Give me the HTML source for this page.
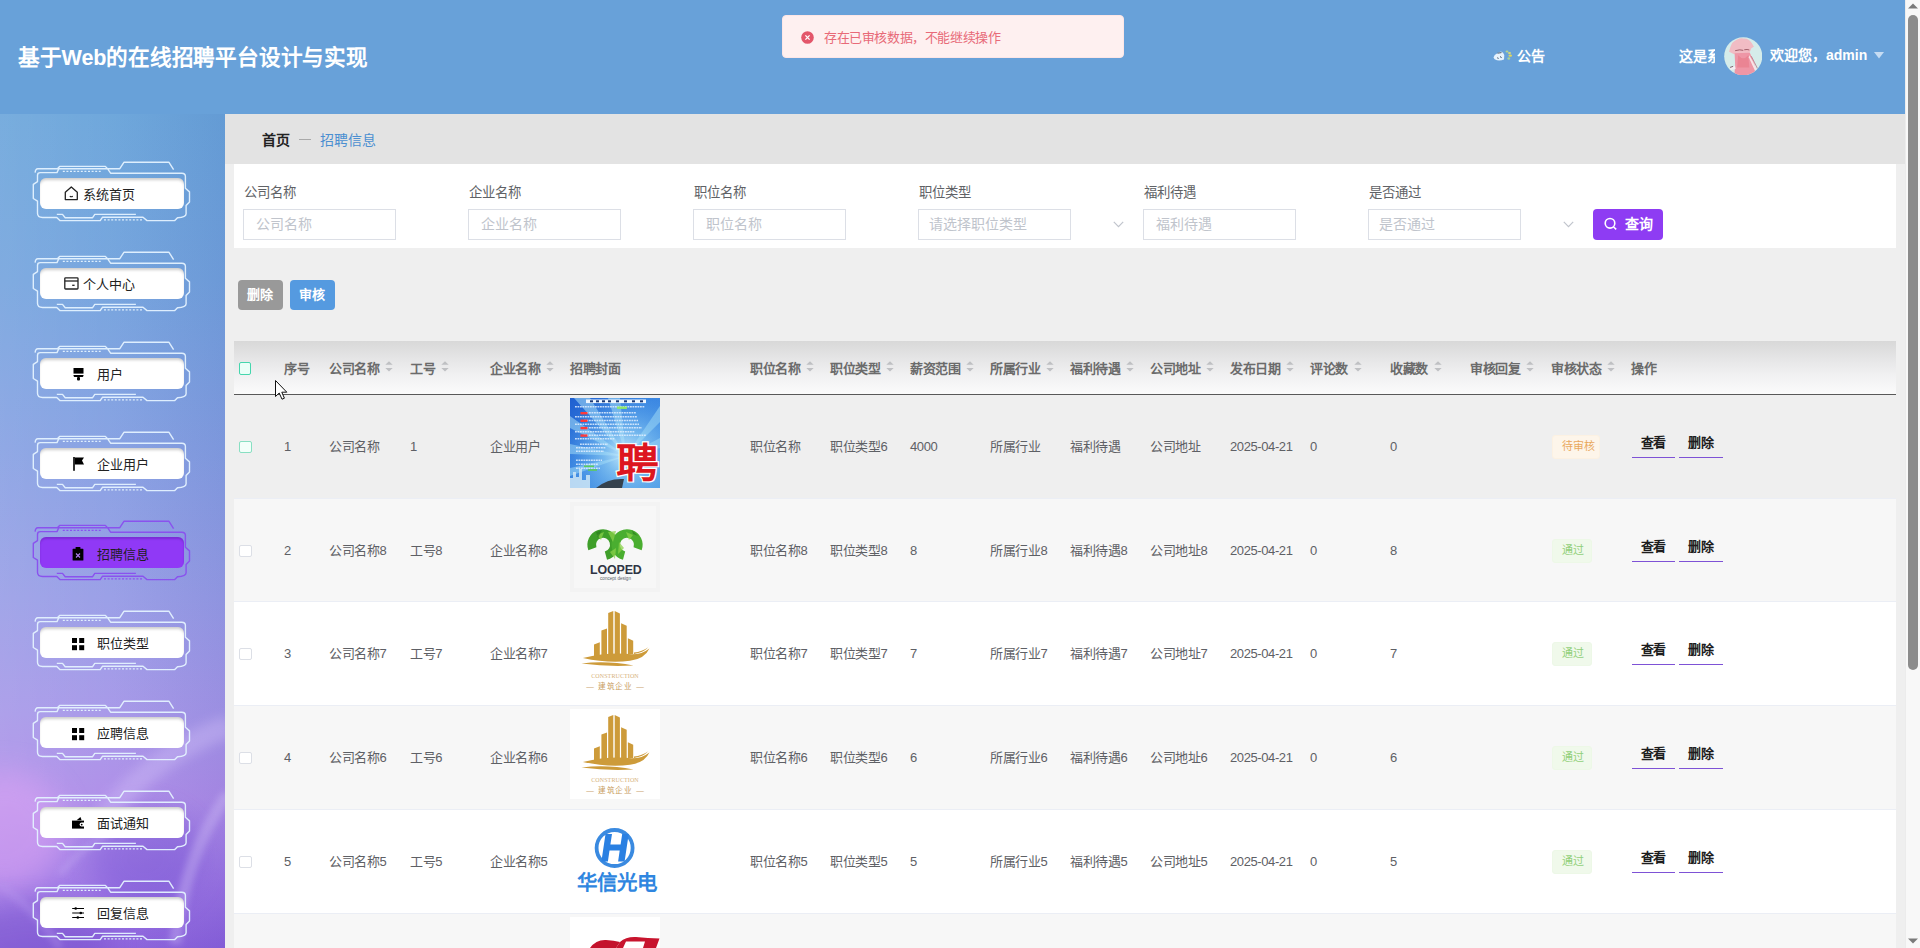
<!DOCTYPE html><html lang="zh-CN"><head><meta charset="utf-8"><title>招聘信息</title><style>
*{margin:0;padding:0;box-sizing:border-box}
html,body{width:1920px;height:948px;overflow:hidden}
body{position:relative;background:#efefef;font-family:"Liberation Sans",sans-serif;color:#606266}
.a{position:absolute}
.t{position:absolute;white-space:nowrap;line-height:1}
</style></head><body>
<div class="a" style="left:0;top:0;width:1905px;height:114px;background:#68a1d9"></div>
<div class="t" style="left:18px;top:47.12px;font-size:21.6px;color:#fff;font-weight:bold;letter-spacing:-0.2px;">基于Web的在线招聘平台设计与实现</div>
<div class="a" style="left:782px;top:15px;width:342px;height:43px;background:#fef0f0;border:1px solid #fde6e6;border-radius:4px"></div>
<svg class="a" style="left:801px;top:30.5px" width="13" height="13" viewBox="0 0 13 13"><circle cx="6.5" cy="6.5" r="6.3" fill="#e3566a"/><path d="M4.4 4.4L8.6 8.6M8.6 4.4L4.4 8.6" stroke="#fff" stroke-width="1.3"/></svg>
<div class="t" style="left:824px;top:30.65px;font-size:13px;color:#e86a78;font-weight:normal;letter-spacing:-0.4px;">存在已审核数据，不能继续操作</div>
<svg class="a" style="left:1492px;top:48px" width="24" height="16" viewBox="0 0 24 16"><path d="M1.5 9.5 Q3 6 6.5 4.5 L9 3.4 Q11.5 4 12.3 7 L12 11.5 Q9 12.8 5 12.3 Q2 11.8 1.5 9.5Z" fill="#e6f2fd"/><path d="M5.5 5.2 L9.5 4.6" stroke="#3b4b5e" stroke-width="0.9"/><path d="M5.2 9.8 l1.4 0.6 M8 8.6 l1.6 1" stroke="#3b4b5e" stroke-width="1"/><ellipse cx="15" cy="3.6" rx="1.4" ry="1" fill="#b8d68a"/><ellipse cx="17.5" cy="5" rx="1.6" ry="1" fill="#d8d878"/><ellipse cx="18.3" cy="7.7" rx="1.8" ry="1.1" fill="#e2d65a"/><ellipse cx="16.8" cy="10.5" rx="1.4" ry="1.3" fill="#a8d09a"/></svg>
<div class="t" style="left:1517px;top:49.30px;font-size:14px;color:#fff;font-weight:600;">公告</div>
<div class="a" style="left:1679px;top:46px;width:36px;height:22px;overflow:hidden"><div class="t" style="left:0px;top:3.30px;font-size:14px;color:#fff;font-weight:bold;">这是系统</div></div>
<svg class="a" style="left:1723.5px;top:36.5px" width="38.5" height="38.5" viewBox="0 0 38 38"><defs><clipPath id="av"><circle cx="19" cy="19" r="18.8"/></clipPath></defs>
<circle cx="19" cy="19" r="18.8" fill="#d5ecea"/>
<g clip-path="url(#av)">
<path d="M8 6 Q14 0.5 19 1.5 Q25 1 28 7 L29.5 9.5 L27 11 L25 16 L10 17 L5 14.5 Q6 10 8 6Z" fill="#f1bcc4"/>
<path d="M10.5 16 L25.5 15.5 L30 26 L31 40 L10 40 L11 28 Z" fill="#ee96a6"/>
<path d="M14 18 Q19 24 24 18 L25 30 L13 30Z" fill="#e9808f" opacity="0.8"/>
<path d="M11 13.5 Q16 12 19 13.2 M20 12.6 Q23 12 25 12.8" stroke="#9a5460" stroke-width="0.9" fill="none"/>
<path d="M25 18 Q29 24 32 32 L30.5 33 Q27 26 24.5 20Z" fill="#f8e3e6"/>
<path d="M27 19 Q30 25 33 31" stroke="#b86878" stroke-width="0.7" fill="none"/>
<path d="M6 30 L11 28.5 L11.5 31.5 L6.5 32.5Z" fill="#f4eef2"/><path d="M6 30 L9 29" stroke="#6a4050" stroke-width="0.8"/>
</g></svg>
<div class="t" style="left:1770px;top:48.30px;font-size:14px;color:#fff;font-weight:bold;">欢迎您，admin</div>
<svg class="a" style="left:1874px;top:52px" width="10" height="7" viewBox="0 0 10 7"><path d="M0 0 L10 0 L5 6.5Z" fill="#c6dcf3"/></svg>
<div class="a" style="left:0;top:114px;width:225px;height:834px;overflow:hidden;background:linear-gradient(180deg,#69a4da 0%,#72a2dd 20%,#849fe2 40%,#979ce6 58%,#a596e8 72%,#ad8ce8 82%,#9c74e4 92%,#8a60dc 100%)">
<div class="a" style="left:0;top:0;width:225px;height:834px;background:linear-gradient(90deg,rgba(255,255,255,0.10) 0%,rgba(255,255,255,0.04) 50%,rgba(30,40,140,0.07) 100%)"></div>
<svg class="a" style="left:0;top:0" width="225" height="834" viewBox="0 0 225 834"><defs><filter id="bl6" x="-50%" y="-50%" width="200%" height="200%"><feGaussianBlur stdDeviation="6"/></filter><filter id="bl12" x="-50%" y="-50%" width="200%" height="200%"><feGaussianBlur stdDeviation="14"/></filter><filter id="bl3" x="-50%" y="-50%" width="200%" height="200%"><feGaussianBlur stdDeviation="3"/></filter></defs>
<ellipse cx="5" cy="716" rx="60" ry="60" fill="#dca4f4" opacity="0.55" filter="url(#bl12)"/>
<ellipse cx="145" cy="745" rx="55" ry="50" fill="#6e4ed0" opacity="0.35" filter="url(#bl12)"/>
<ellipse cx="30" cy="830" rx="80" ry="40" fill="#6a44c4" opacity="0.35" filter="url(#bl12)"/>
<path d="M230 612 Q150 640 95 715" fill="none" stroke="#d8c8fa" stroke-width="22" opacity="0.35" filter="url(#bl6)"/>
<path d="M228 680 Q185 740 175 830" fill="none" stroke="#d4c4f8" stroke-width="12" opacity="0.35" filter="url(#bl3)"/>
<path d="M60 760 Q110 700 175 705" fill="none" stroke="#c8b0f4" stroke-width="6" opacity="0.35" filter="url(#bl3)"/>
<path d="M0 770 Q40 800 60 834" fill="none" stroke="#b898ee" stroke-width="8" opacity="0.35" filter="url(#bl3)"/>
</svg>
</div>
<svg class="a" style="left:30px;top:157.8px;overflow:visible" width="165" height="70" viewBox="-10 -20 165 70"><path d="M-4.9,-5.4 Q-4.5,-9.3 -2.2,-9.3 L79.8,-9.3 L83.9,-15.7 L129,-15.7 L133.6,-8.4 M17.4,-9.3 L19.6,-11.6 L65.4,-11.6 L67.5,-9.3 M67.5,-9.3 L70.6,-4.8 L141.8,-4.8 Q145.4,-4.8 145.4,-1.6 L145.4,10.3 L149.5,13.9 L149.5,24 L146.1,27.6 L146.1,35.8 Q146.1,39.5 137.5,39.7 L134.8,42.6 L107,42.6 L103,39.3 L62.4,39.3 L60.2,42.6 L19.9,42.6 L16.8,39.5 L2.6,39.5 Q-2.5,39.5 -2.5,35.3 L-2.5,23.2 L-6.7,20.5 L-6.7,6.4 L-2.5,3.6 L-2.5,-2.6 Q-2.5,-5.4 0.3,-5.4 L17,-5.4 L18.8,-9.3 M16.8,36.4 L22.5,36.4 L25.2,39.7 L52.6,39.7 L54.8,36.4 L95.9,36.4" fill="none" stroke="rgba(228,242,255,0.95)" stroke-width="1.4" stroke-linejoin="round"/><path d="M22.8,-6.6 L60.7,-6.6 M64,41.8 L102.3,41.8" fill="none" stroke="rgba(228,242,255,0.95)" stroke-width="1.3" stroke-dasharray="2 1.6"/></svg>
<div class="a" style="left:40px;top:177.8px;width:144px;height:31px;border-radius:6px;background:#fff;box-shadow:inset 0 3px 3px -1px rgba(0,0,0,0.2)"></div>
<div class="a" style="left:63.5px;top:185.6px;line-height:0"><svg width="15" height="15" viewBox="0 0 15 15"><path d="M1.3 6.2 L7.3 1 L13.3 6.2 L13.3 13.6 L1.3 13.6 Z" fill="none" stroke="#222" stroke-width="1.3" stroke-linejoin="round"/><path d="M5.8 10.3 Q7.3 11.2 8.8 10.3" fill="none" stroke="#222" stroke-width="1.2"/></svg></div>
<div class="t" style="left:83px;top:187.95px;font-size:13px;color:#222;font-weight:normal;">系统首页</div>
<svg class="a" style="left:30px;top:247.7px;overflow:visible" width="165" height="70" viewBox="-10 -20 165 70"><path d="M-4.9,-5.4 Q-4.5,-9.3 -2.2,-9.3 L79.8,-9.3 L83.9,-15.7 L129,-15.7 L133.6,-8.4 M17.4,-9.3 L19.6,-11.6 L65.4,-11.6 L67.5,-9.3 M67.5,-9.3 L70.6,-4.8 L141.8,-4.8 Q145.4,-4.8 145.4,-1.6 L145.4,10.3 L149.5,13.9 L149.5,24 L146.1,27.6 L146.1,35.8 Q146.1,39.5 137.5,39.7 L134.8,42.6 L107,42.6 L103,39.3 L62.4,39.3 L60.2,42.6 L19.9,42.6 L16.8,39.5 L2.6,39.5 Q-2.5,39.5 -2.5,35.3 L-2.5,23.2 L-6.7,20.5 L-6.7,6.4 L-2.5,3.6 L-2.5,-2.6 Q-2.5,-5.4 0.3,-5.4 L17,-5.4 L18.8,-9.3 M16.8,36.4 L22.5,36.4 L25.2,39.7 L52.6,39.7 L54.8,36.4 L95.9,36.4" fill="none" stroke="rgba(228,242,255,0.95)" stroke-width="1.4" stroke-linejoin="round"/><path d="M22.8,-6.6 L60.7,-6.6 M64,41.8 L102.3,41.8" fill="none" stroke="rgba(228,242,255,0.95)" stroke-width="1.3" stroke-dasharray="2 1.6"/></svg>
<div class="a" style="left:40px;top:267.7px;width:144px;height:31px;border-radius:6px;background:#fff;box-shadow:inset 0 3px 3px -1px rgba(0,0,0,0.2)"></div>
<div class="a" style="left:63.5px;top:276.7px;line-height:0"><svg width="15" height="13" viewBox="0 0 15 13"><rect x="0.8" y="0.8" width="13.2" height="11.2" rx="0.8" fill="none" stroke="#222" stroke-width="1.3"/><path d="M0.8 4 H14" stroke="#222" stroke-width="1.3"/><path d="M8.2 8.3 H10.6" stroke="#222" stroke-width="1.3"/></svg></div>
<div class="t" style="left:83px;top:277.85px;font-size:13px;color:#222;font-weight:normal;">个人中心</div>
<svg class="a" style="left:30px;top:337.6px;overflow:visible" width="165" height="70" viewBox="-10 -20 165 70"><path d="M-4.9,-5.4 Q-4.5,-9.3 -2.2,-9.3 L79.8,-9.3 L83.9,-15.7 L129,-15.7 L133.6,-8.4 M17.4,-9.3 L19.6,-11.6 L65.4,-11.6 L67.5,-9.3 M67.5,-9.3 L70.6,-4.8 L141.8,-4.8 Q145.4,-4.8 145.4,-1.6 L145.4,10.3 L149.5,13.9 L149.5,24 L146.1,27.6 L146.1,35.8 Q146.1,39.5 137.5,39.7 L134.8,42.6 L107,42.6 L103,39.3 L62.4,39.3 L60.2,42.6 L19.9,42.6 L16.8,39.5 L2.6,39.5 Q-2.5,39.5 -2.5,35.3 L-2.5,23.2 L-6.7,20.5 L-6.7,6.4 L-2.5,3.6 L-2.5,-2.6 Q-2.5,-5.4 0.3,-5.4 L17,-5.4 L18.8,-9.3 M16.8,36.4 L22.5,36.4 L25.2,39.7 L52.6,39.7 L54.8,36.4 L95.9,36.4" fill="none" stroke="rgba(228,242,255,0.95)" stroke-width="1.4" stroke-linejoin="round"/><path d="M22.8,-6.6 L60.7,-6.6 M64,41.8 L102.3,41.8" fill="none" stroke="rgba(228,242,255,0.95)" stroke-width="1.3" stroke-dasharray="2 1.6"/></svg>
<div class="a" style="left:40px;top:357.6px;width:144px;height:31px;border-radius:6px;background:#fff;box-shadow:inset 0 3px 3px -1px rgba(0,0,0,0.2)"></div>
<div class="a" style="left:73px;top:368.0px;line-height:0"><svg width="11" height="13" viewBox="0 0 11 13"><rect x="0.5" y="0" width="10" height="5.6" fill="#000"/><path d="M0.4 7 H10.6 L10.2 8.4 Q9.8 9 9 9 H2 Q1.2 9 0.8 8.4 Z" fill="#000"/><rect x="4" y="9" width="3" height="3.4" rx="1" fill="#000"/></svg></div>
<div class="t" style="left:96.5px;top:367.75px;font-size:13px;color:#222;font-weight:normal;">用户</div>
<svg class="a" style="left:30px;top:427.5px;overflow:visible" width="165" height="70" viewBox="-10 -20 165 70"><path d="M-4.9,-5.4 Q-4.5,-9.3 -2.2,-9.3 L79.8,-9.3 L83.9,-15.7 L129,-15.7 L133.6,-8.4 M17.4,-9.3 L19.6,-11.6 L65.4,-11.6 L67.5,-9.3 M67.5,-9.3 L70.6,-4.8 L141.8,-4.8 Q145.4,-4.8 145.4,-1.6 L145.4,10.3 L149.5,13.9 L149.5,24 L146.1,27.6 L146.1,35.8 Q146.1,39.5 137.5,39.7 L134.8,42.6 L107,42.6 L103,39.3 L62.4,39.3 L60.2,42.6 L19.9,42.6 L16.8,39.5 L2.6,39.5 Q-2.5,39.5 -2.5,35.3 L-2.5,23.2 L-6.7,20.5 L-6.7,6.4 L-2.5,3.6 L-2.5,-2.6 Q-2.5,-5.4 0.3,-5.4 L17,-5.4 L18.8,-9.3 M16.8,36.4 L22.5,36.4 L25.2,39.7 L52.6,39.7 L54.8,36.4 L95.9,36.4" fill="none" stroke="rgba(228,242,255,0.95)" stroke-width="1.4" stroke-linejoin="round"/><path d="M22.8,-6.6 L60.7,-6.6 M64,41.8 L102.3,41.8" fill="none" stroke="rgba(228,242,255,0.95)" stroke-width="1.3" stroke-dasharray="2 1.6"/></svg>
<div class="a" style="left:40px;top:447.5px;width:144px;height:31px;border-radius:6px;background:#fff;box-shadow:inset 0 3px 3px -1px rgba(0,0,0,0.2)"></div>
<div class="a" style="left:72.8px;top:457.0px;line-height:0"><svg width="12" height="14" viewBox="0 0 12 14"><rect x="0.2" y="0" width="1.6" height="13.8" fill="#000"/><path d="M1.8 0.6 H11 L9 3.6 L11 7.6 H1.8 Z" fill="#000"/></svg></div>
<div class="t" style="left:96.5px;top:457.65px;font-size:13px;color:#222;font-weight:normal;">企业用户</div>
<svg class="a" style="left:30px;top:517.4px;overflow:visible" width="165" height="70" viewBox="-10 -20 165 70"><path d="M-4.9,-5.4 Q-4.5,-9.3 -2.2,-9.3 L79.8,-9.3 L83.9,-15.7 L129,-15.7 L133.6,-8.4 M17.4,-9.3 L19.6,-11.6 L65.4,-11.6 L67.5,-9.3 M67.5,-9.3 L70.6,-4.8 L141.8,-4.8 Q145.4,-4.8 145.4,-1.6 L145.4,10.3 L149.5,13.9 L149.5,24 L146.1,27.6 L146.1,35.8 Q146.1,39.5 137.5,39.7 L134.8,42.6 L107,42.6 L103,39.3 L62.4,39.3 L60.2,42.6 L19.9,42.6 L16.8,39.5 L2.6,39.5 Q-2.5,39.5 -2.5,35.3 L-2.5,23.2 L-6.7,20.5 L-6.7,6.4 L-2.5,3.6 L-2.5,-2.6 Q-2.5,-5.4 0.3,-5.4 L17,-5.4 L18.8,-9.3 M16.8,36.4 L22.5,36.4 L25.2,39.7 L52.6,39.7 L54.8,36.4 L95.9,36.4" fill="none" stroke="#8a52ee" stroke-width="1.4" stroke-linejoin="round"/><path d="M22.8,-6.6 L60.7,-6.6 M64,41.8 L102.3,41.8" fill="none" stroke="#8a52ee" stroke-width="1.3" stroke-dasharray="2 1.6"/></svg>
<div class="a" style="left:40px;top:537.4px;width:144px;height:31px;border-radius:6px;background:#9039f6;box-shadow:inset 0 2px 2px rgba(60,0,120,0.25)"></div>
<div class="a" style="left:72.3px;top:547.0px;line-height:0"><svg width="12" height="14" viewBox="0 0 12 14"><rect x="0.6" y="1.8" width="10.8" height="11.8" rx="0.6" fill="#000"/><rect x="3.6" y="0" width="4.8" height="2.6" rx="0.6" fill="#000"/><path d="M4 6.5 L8 10.5 M8 6.5 L4 10.5" stroke="#b07ef0" stroke-width="1.1"/></svg></div>
<div class="t" style="left:96.5px;top:547.55px;font-size:13px;color:#1f1f1f;font-weight:normal;">招聘信息</div>
<svg class="a" style="left:30px;top:607.3px;overflow:visible" width="165" height="70" viewBox="-10 -20 165 70"><path d="M-4.9,-5.4 Q-4.5,-9.3 -2.2,-9.3 L79.8,-9.3 L83.9,-15.7 L129,-15.7 L133.6,-8.4 M17.4,-9.3 L19.6,-11.6 L65.4,-11.6 L67.5,-9.3 M67.5,-9.3 L70.6,-4.8 L141.8,-4.8 Q145.4,-4.8 145.4,-1.6 L145.4,10.3 L149.5,13.9 L149.5,24 L146.1,27.6 L146.1,35.8 Q146.1,39.5 137.5,39.7 L134.8,42.6 L107,42.6 L103,39.3 L62.4,39.3 L60.2,42.6 L19.9,42.6 L16.8,39.5 L2.6,39.5 Q-2.5,39.5 -2.5,35.3 L-2.5,23.2 L-6.7,20.5 L-6.7,6.4 L-2.5,3.6 L-2.5,-2.6 Q-2.5,-5.4 0.3,-5.4 L17,-5.4 L18.8,-9.3 M16.8,36.4 L22.5,36.4 L25.2,39.7 L52.6,39.7 L54.8,36.4 L95.9,36.4" fill="none" stroke="rgba(228,242,255,0.95)" stroke-width="1.4" stroke-linejoin="round"/><path d="M22.8,-6.6 L60.7,-6.6 M64,41.8 L102.3,41.8" fill="none" stroke="rgba(228,242,255,0.95)" stroke-width="1.3" stroke-dasharray="2 1.6"/></svg>
<div class="a" style="left:40px;top:627.3px;width:144px;height:31px;border-radius:6px;background:#fff;box-shadow:inset 0 3px 3px -1px rgba(0,0,0,0.2)"></div>
<div class="a" style="left:72.2px;top:638.0px;line-height:0"><svg width="13" height="13" viewBox="0 0 13 13"><rect x="0" y="0" width="5" height="5" fill="#000"/><rect x="7.2" y="0" width="5" height="5" fill="#000"/><rect x="0" y="7.2" width="5" height="5" fill="#000"/><rect x="7.2" y="7.2" width="5" height="5" fill="#000"/></svg></div>
<div class="t" style="left:96.5px;top:637.45px;font-size:13px;color:#222;font-weight:normal;">职位类型</div>
<svg class="a" style="left:30px;top:697.2px;overflow:visible" width="165" height="70" viewBox="-10 -20 165 70"><path d="M-4.9,-5.4 Q-4.5,-9.3 -2.2,-9.3 L79.8,-9.3 L83.9,-15.7 L129,-15.7 L133.6,-8.4 M17.4,-9.3 L19.6,-11.6 L65.4,-11.6 L67.5,-9.3 M67.5,-9.3 L70.6,-4.8 L141.8,-4.8 Q145.4,-4.8 145.4,-1.6 L145.4,10.3 L149.5,13.9 L149.5,24 L146.1,27.6 L146.1,35.8 Q146.1,39.5 137.5,39.7 L134.8,42.6 L107,42.6 L103,39.3 L62.4,39.3 L60.2,42.6 L19.9,42.6 L16.8,39.5 L2.6,39.5 Q-2.5,39.5 -2.5,35.3 L-2.5,23.2 L-6.7,20.5 L-6.7,6.4 L-2.5,3.6 L-2.5,-2.6 Q-2.5,-5.4 0.3,-5.4 L17,-5.4 L18.8,-9.3 M16.8,36.4 L22.5,36.4 L25.2,39.7 L52.6,39.7 L54.8,36.4 L95.9,36.4" fill="none" stroke="rgba(228,242,255,0.95)" stroke-width="1.4" stroke-linejoin="round"/><path d="M22.8,-6.6 L60.7,-6.6 M64,41.8 L102.3,41.8" fill="none" stroke="rgba(228,242,255,0.95)" stroke-width="1.3" stroke-dasharray="2 1.6"/></svg>
<div class="a" style="left:40px;top:717.2px;width:144px;height:31px;border-radius:6px;background:#fff;box-shadow:inset 0 3px 3px -1px rgba(0,0,0,0.2)"></div>
<div class="a" style="left:72.2px;top:727.9px;line-height:0"><svg width="13" height="13" viewBox="0 0 13 13"><rect x="0" y="0" width="5" height="5" fill="#000"/><rect x="7.2" y="0" width="5" height="5" fill="#000"/><rect x="0" y="7.2" width="5" height="5" fill="#000"/><rect x="7.2" y="7.2" width="5" height="5" fill="#000"/></svg></div>
<div class="t" style="left:96.5px;top:727.35px;font-size:13px;color:#222;font-weight:normal;">应聘信息</div>
<svg class="a" style="left:30px;top:787.1px;overflow:visible" width="165" height="70" viewBox="-10 -20 165 70"><path d="M-4.9,-5.4 Q-4.5,-9.3 -2.2,-9.3 L79.8,-9.3 L83.9,-15.7 L129,-15.7 L133.6,-8.4 M17.4,-9.3 L19.6,-11.6 L65.4,-11.6 L67.5,-9.3 M67.5,-9.3 L70.6,-4.8 L141.8,-4.8 Q145.4,-4.8 145.4,-1.6 L145.4,10.3 L149.5,13.9 L149.5,24 L146.1,27.6 L146.1,35.8 Q146.1,39.5 137.5,39.7 L134.8,42.6 L107,42.6 L103,39.3 L62.4,39.3 L60.2,42.6 L19.9,42.6 L16.8,39.5 L2.6,39.5 Q-2.5,39.5 -2.5,35.3 L-2.5,23.2 L-6.7,20.5 L-6.7,6.4 L-2.5,3.6 L-2.5,-2.6 Q-2.5,-5.4 0.3,-5.4 L17,-5.4 L18.8,-9.3 M16.8,36.4 L22.5,36.4 L25.2,39.7 L52.6,39.7 L54.8,36.4 L95.9,36.4" fill="none" stroke="rgba(228,242,255,0.95)" stroke-width="1.4" stroke-linejoin="round"/><path d="M22.8,-6.6 L60.7,-6.6 M64,41.8 L102.3,41.8" fill="none" stroke="rgba(228,242,255,0.95)" stroke-width="1.3" stroke-dasharray="2 1.6"/></svg>
<div class="a" style="left:40px;top:807.1px;width:144px;height:31px;border-radius:6px;background:#fff;box-shadow:inset 0 3px 3px -1px rgba(0,0,0,0.2)"></div>
<div class="a" style="left:72.2px;top:817.2px;line-height:0"><svg width="13" height="12" viewBox="0 0 13 12"><path d="M4.5 3.2 L8.5 0 L9.6 3.2 Z" fill="#000"/><rect x="0" y="3.6" width="12" height="8" fill="#000"/><path d="M12 5.6 H9.6 Q7.6 5.6 7.6 7.6 Q7.6 9.6 9.6 9.6 H12 Z" fill="#fff"/><circle cx="9.7" cy="7.6" r="0.9" fill="#000"/></svg></div>
<div class="t" style="left:96.5px;top:817.25px;font-size:13px;color:#222;font-weight:normal;">面试通知</div>
<svg class="a" style="left:30px;top:877.0px;overflow:visible" width="165" height="70" viewBox="-10 -20 165 70"><path d="M-4.9,-5.4 Q-4.5,-9.3 -2.2,-9.3 L79.8,-9.3 L83.9,-15.7 L129,-15.7 L133.6,-8.4 M17.4,-9.3 L19.6,-11.6 L65.4,-11.6 L67.5,-9.3 M67.5,-9.3 L70.6,-4.8 L141.8,-4.8 Q145.4,-4.8 145.4,-1.6 L145.4,10.3 L149.5,13.9 L149.5,24 L146.1,27.6 L146.1,35.8 Q146.1,39.5 137.5,39.7 L134.8,42.6 L107,42.6 L103,39.3 L62.4,39.3 L60.2,42.6 L19.9,42.6 L16.8,39.5 L2.6,39.5 Q-2.5,39.5 -2.5,35.3 L-2.5,23.2 L-6.7,20.5 L-6.7,6.4 L-2.5,3.6 L-2.5,-2.6 Q-2.5,-5.4 0.3,-5.4 L17,-5.4 L18.8,-9.3 M16.8,36.4 L22.5,36.4 L25.2,39.7 L52.6,39.7 L54.8,36.4 L95.9,36.4" fill="none" stroke="rgba(228,242,255,0.95)" stroke-width="1.4" stroke-linejoin="round"/><path d="M22.8,-6.6 L60.7,-6.6 M64,41.8 L102.3,41.8" fill="none" stroke="rgba(228,242,255,0.95)" stroke-width="1.3" stroke-dasharray="2 1.6"/></svg>
<div class="a" style="left:40px;top:897.0px;width:144px;height:31px;border-radius:6px;background:#fff;box-shadow:inset 0 3px 3px -1px rgba(0,0,0,0.2)"></div>
<div class="a" style="left:72px;top:907.2px;line-height:0"><svg width="13" height="12" viewBox="0 0 13 12"><path d="M0.2 1.5 H12 M0.2 6 H12 M0.2 10.5 H12" stroke="#000" stroke-width="1.1"/><circle cx="3.7" cy="1.5" r="1.3" fill="#000"/><circle cx="8.8" cy="6" r="1.3" fill="#000"/><circle cx="5.8" cy="10.5" r="1.3" fill="#000"/></svg></div>
<div class="t" style="left:96.5px;top:907.15px;font-size:13px;color:#222;font-weight:normal;">回复信息</div>
<div class="a" style="left:225px;top:114px;width:1680px;height:50px;background:#e3e3e3"></div>
<div class="t" style="left:261.5px;top:132.80px;font-size:14px;color:#222;font-weight:bold;">首页</div>
<div class="a" style="left:299px;top:139px;width:12px;height:1.3px;background:#a9a9a9"></div>
<div class="t" style="left:319.5px;top:132.60px;font-size:14px;color:#4b8fd1;font-weight:normal;letter-spacing:0.3px;">招聘信息</div>
<div class="a" style="left:234px;top:164px;width:1662px;height:84px;background:#fff"></div>
<div class="t" style="left:244px;top:185.63px;font-size:13.4px;color:#606266;font-weight:500;">公司名称</div>
<div class="a" style="left:243px;top:209px;width:153px;height:31px;border:1px solid #dcdfe6"></div>
<div class="t" style="left:256px;top:217.00px;font-size:14px;color:#c0c4cc;font-weight:normal;">公司名称</div>
<div class="t" style="left:469px;top:185.63px;font-size:13.4px;color:#606266;font-weight:500;">企业名称</div>
<div class="a" style="left:468px;top:209px;width:153px;height:31px;border:1px solid #dcdfe6"></div>
<div class="t" style="left:481px;top:217.00px;font-size:14px;color:#c0c4cc;font-weight:normal;">企业名称</div>
<div class="t" style="left:694px;top:185.63px;font-size:13.4px;color:#606266;font-weight:500;">职位名称</div>
<div class="a" style="left:693px;top:209px;width:153px;height:31px;border:1px solid #dcdfe6"></div>
<div class="t" style="left:706px;top:217.00px;font-size:14px;color:#c0c4cc;font-weight:normal;">职位名称</div>
<div class="t" style="left:919px;top:185.63px;font-size:13.4px;color:#606266;font-weight:500;">职位类型</div>
<div class="a" style="left:918px;top:209px;width:153px;height:31px;border:1px solid #dcdfe6"></div>
<div class="t" style="left:928.5px;top:217.00px;font-size:14px;color:#c0c4cc;font-weight:normal;">请选择职位类型</div>
<svg class="a" style="left:1113px;top:221px" width="11" height="7" viewBox="0 0 11 7"><path d="M0.8 0.8 L5.5 5.6 L10.2 0.8" fill="none" stroke="#c0c4cc" stroke-width="1.2"/></svg>
<div class="t" style="left:1144px;top:185.63px;font-size:13.4px;color:#606266;font-weight:500;">福利待遇</div>
<div class="a" style="left:1143px;top:209px;width:153px;height:31px;border:1px solid #dcdfe6"></div>
<div class="t" style="left:1156px;top:217.00px;font-size:14px;color:#c0c4cc;font-weight:normal;">福利待遇</div>
<div class="t" style="left:1369px;top:185.63px;font-size:13.4px;color:#606266;font-weight:500;">是否通过</div>
<div class="a" style="left:1368px;top:209px;width:153px;height:31px;border:1px solid #dcdfe6"></div>
<div class="t" style="left:1378.5px;top:217.00px;font-size:14px;color:#c0c4cc;font-weight:normal;">是否通过</div>
<svg class="a" style="left:1563px;top:221px" width="11" height="7" viewBox="0 0 11 7"><path d="M0.8 0.8 L5.5 5.6 L10.2 0.8" fill="none" stroke="#c0c4cc" stroke-width="1.2"/></svg>
<div class="a" style="left:1593px;top:209px;width:70px;height:31px;border-radius:4px;background:#8e3cf3"></div>
<svg class="a" style="left:1604px;top:217px" width="14" height="14" viewBox="0 0 14 14"><circle cx="6" cy="6.3" r="4.8" fill="none" stroke="#fff" stroke-width="1.6"/><path d="M9.6 10 L12.2 12.4" stroke="#fff" stroke-width="1.6"/></svg>
<div class="t" style="left:1624.5px;top:217.30px;font-size:14px;color:#fff;font-weight:bold;">查询</div>
<div class="a" style="left:238px;top:280px;width:45px;height:30px;border-radius:4px;background:#999"></div>
<div class="t" style="left:246.8px;top:287.85px;font-size:13px;color:#fff;font-weight:bold;letter-spacing:0.6px;">删除</div>
<div class="a" style="left:290px;top:280px;width:45px;height:30px;border-radius:4px;background:#559ae0"></div>
<div class="t" style="left:298.8px;top:287.85px;font-size:13px;color:#fff;font-weight:bold;letter-spacing:0.6px;">审核</div>
<div class="a" style="left:234px;top:341px;width:1662px;height:53px;background:linear-gradient(180deg,#d8d8d8 0%,#e6e6e7 35%,#f1f1f2 65%,#fbfbfb 100%)"></div>
<div class="a" style="left:234px;top:394px;width:1662px;height:1px;background:#595959"></div>
<div class="t" style="left:284px;top:361.65px;font-size:13px;color:#6b6b6b;font-weight:bold;letter-spacing:-0.4px;">序号</div>
<div class="t" style="left:329px;top:361.65px;font-size:13px;color:#6b6b6b;font-weight:bold;letter-spacing:-0.4px;">公司名称</div>
<div class="a" style="left:385.4px;top:361px;line-height:0"><svg width="8" height="11" viewBox="0 0 8 11"><path d="M0.3 3.7 L4 0.2 L7.7 3.7Z M0.3 7.1 L4 10.6 L7.7 7.1Z" fill="#bfc0c3"/></svg></div>
<div class="t" style="left:410px;top:361.65px;font-size:13px;color:#6b6b6b;font-weight:bold;letter-spacing:-0.4px;">工号</div>
<div class="a" style="left:441.2px;top:361px;line-height:0"><svg width="8" height="11" viewBox="0 0 8 11"><path d="M0.3 3.7 L4 0.2 L7.7 3.7Z M0.3 7.1 L4 10.6 L7.7 7.1Z" fill="#bfc0c3"/></svg></div>
<div class="t" style="left:490px;top:361.65px;font-size:13px;color:#6b6b6b;font-weight:bold;letter-spacing:-0.4px;">企业名称</div>
<div class="a" style="left:546.4px;top:361px;line-height:0"><svg width="8" height="11" viewBox="0 0 8 11"><path d="M0.3 3.7 L4 0.2 L7.7 3.7Z M0.3 7.1 L4 10.6 L7.7 7.1Z" fill="#bfc0c3"/></svg></div>
<div class="t" style="left:570px;top:361.65px;font-size:13px;color:#6b6b6b;font-weight:bold;letter-spacing:-0.4px;">招聘封面</div>
<div class="t" style="left:750px;top:361.65px;font-size:13px;color:#6b6b6b;font-weight:bold;letter-spacing:-0.4px;">职位名称</div>
<div class="a" style="left:806.4px;top:361px;line-height:0"><svg width="8" height="11" viewBox="0 0 8 11"><path d="M0.3 3.7 L4 0.2 L7.7 3.7Z M0.3 7.1 L4 10.6 L7.7 7.1Z" fill="#bfc0c3"/></svg></div>
<div class="t" style="left:830px;top:361.65px;font-size:13px;color:#6b6b6b;font-weight:bold;letter-spacing:-0.4px;">职位类型</div>
<div class="a" style="left:886.4px;top:361px;line-height:0"><svg width="8" height="11" viewBox="0 0 8 11"><path d="M0.3 3.7 L4 0.2 L7.7 3.7Z M0.3 7.1 L4 10.6 L7.7 7.1Z" fill="#bfc0c3"/></svg></div>
<div class="t" style="left:910px;top:361.65px;font-size:13px;color:#6b6b6b;font-weight:bold;letter-spacing:-0.4px;">薪资范围</div>
<div class="a" style="left:966.4px;top:361px;line-height:0"><svg width="8" height="11" viewBox="0 0 8 11"><path d="M0.3 3.7 L4 0.2 L7.7 3.7Z M0.3 7.1 L4 10.6 L7.7 7.1Z" fill="#bfc0c3"/></svg></div>
<div class="t" style="left:990px;top:361.65px;font-size:13px;color:#6b6b6b;font-weight:bold;letter-spacing:-0.4px;">所属行业</div>
<div class="a" style="left:1046.4px;top:361px;line-height:0"><svg width="8" height="11" viewBox="0 0 8 11"><path d="M0.3 3.7 L4 0.2 L7.7 3.7Z M0.3 7.1 L4 10.6 L7.7 7.1Z" fill="#bfc0c3"/></svg></div>
<div class="t" style="left:1070px;top:361.65px;font-size:13px;color:#6b6b6b;font-weight:bold;letter-spacing:-0.4px;">福利待遇</div>
<div class="a" style="left:1126.4px;top:361px;line-height:0"><svg width="8" height="11" viewBox="0 0 8 11"><path d="M0.3 3.7 L4 0.2 L7.7 3.7Z M0.3 7.1 L4 10.6 L7.7 7.1Z" fill="#bfc0c3"/></svg></div>
<div class="t" style="left:1150px;top:361.65px;font-size:13px;color:#6b6b6b;font-weight:bold;letter-spacing:-0.4px;">公司地址</div>
<div class="a" style="left:1206.4px;top:361px;line-height:0"><svg width="8" height="11" viewBox="0 0 8 11"><path d="M0.3 3.7 L4 0.2 L7.7 3.7Z M0.3 7.1 L4 10.6 L7.7 7.1Z" fill="#bfc0c3"/></svg></div>
<div class="t" style="left:1230px;top:361.65px;font-size:13px;color:#6b6b6b;font-weight:bold;letter-spacing:-0.4px;">发布日期</div>
<div class="a" style="left:1286.4px;top:361px;line-height:0"><svg width="8" height="11" viewBox="0 0 8 11"><path d="M0.3 3.7 L4 0.2 L7.7 3.7Z M0.3 7.1 L4 10.6 L7.7 7.1Z" fill="#bfc0c3"/></svg></div>
<div class="t" style="left:1310px;top:361.65px;font-size:13px;color:#6b6b6b;font-weight:bold;letter-spacing:-0.4px;">评论数</div>
<div class="a" style="left:1353.8px;top:361px;line-height:0"><svg width="8" height="11" viewBox="0 0 8 11"><path d="M0.3 3.7 L4 0.2 L7.7 3.7Z M0.3 7.1 L4 10.6 L7.7 7.1Z" fill="#bfc0c3"/></svg></div>
<div class="t" style="left:1390px;top:361.65px;font-size:13px;color:#6b6b6b;font-weight:bold;letter-spacing:-0.4px;">收藏数</div>
<div class="a" style="left:1433.8px;top:361px;line-height:0"><svg width="8" height="11" viewBox="0 0 8 11"><path d="M0.3 3.7 L4 0.2 L7.7 3.7Z M0.3 7.1 L4 10.6 L7.7 7.1Z" fill="#bfc0c3"/></svg></div>
<div class="t" style="left:1470px;top:361.65px;font-size:13px;color:#6b6b6b;font-weight:bold;letter-spacing:-0.4px;">审核回复</div>
<div class="a" style="left:1526.4px;top:361px;line-height:0"><svg width="8" height="11" viewBox="0 0 8 11"><path d="M0.3 3.7 L4 0.2 L7.7 3.7Z M0.3 7.1 L4 10.6 L7.7 7.1Z" fill="#bfc0c3"/></svg></div>
<div class="t" style="left:1551px;top:361.65px;font-size:13px;color:#6b6b6b;font-weight:bold;letter-spacing:-0.4px;">审核状态</div>
<div class="a" style="left:1607.4px;top:361px;line-height:0"><svg width="8" height="11" viewBox="0 0 8 11"><path d="M0.3 3.7 L4 0.2 L7.7 3.7Z M0.3 7.1 L4 10.6 L7.7 7.1Z" fill="#bfc0c3"/></svg></div>
<div class="t" style="left:1631px;top:361.65px;font-size:13px;color:#6b6b6b;font-weight:bold;letter-spacing:-0.4px;">操作</div>
<div class="a" style="left:239.3px;top:362.2px;width:12px;height:12.5px;border:1.1px solid #45d6ad;border-radius:2px;background:#eafff8"></div>
<div class="a" style="left:234px;top:395px;width:1662px;height:104px;background:#efefef;border-bottom:1px solid #ebeef5"></div>
<div class="a" style="left:234px;top:499px;width:1662px;height:103px;background:#f7f7f7;border-bottom:1px solid #ebeef5"></div>
<div class="a" style="left:234px;top:602px;width:1662px;height:104px;background:#ffffff;border-bottom:1px solid #ebeef5"></div>
<div class="a" style="left:234px;top:706px;width:1662px;height:104px;background:#f7f7f7;border-bottom:1px solid #ebeef5"></div>
<div class="a" style="left:234px;top:810px;width:1662px;height:104px;background:#ffffff;border-bottom:1px solid #ebeef5"></div>
<div class="a" style="left:234px;top:914px;width:1662px;height:46px;background:#f7f7f7;border-bottom:1px solid #ebeef5"></div>
<div class="a" style="left:239px;top:440.5px;width:12.5px;height:12.5px;border:1.2px solid #88dfc2;border-radius:2px;background:#f3fffa"></div>
<div class="t" style="left:284px;top:440.05px;font-size:13px;color:#5e6065;font-weight:normal;letter-spacing:-0.4px;">1</div>
<div class="t" style="left:329px;top:440.05px;font-size:13px;color:#5e6065;font-weight:normal;letter-spacing:-0.4px;">公司名称</div>
<div class="t" style="left:410px;top:440.05px;font-size:13px;color:#5e6065;font-weight:normal;letter-spacing:-0.4px;">1</div>
<div class="t" style="left:490px;top:440.05px;font-size:13px;color:#5e6065;font-weight:normal;letter-spacing:-0.4px;">企业用户</div>
<div class="a" style="left:570px;top:398px;width:90px;height:90px;overflow:hidden"><svg width="90" height="90" viewBox="0 0 90 90"><defs><linearGradient id="pg" x1="0" y1="0" x2="1" y2="1"><stop offset="0" stop-color="#1f5fd0"/><stop offset="0.45" stop-color="#3a86e2"/><stop offset="1" stop-color="#4f9be6"/></linearGradient>
<radialGradient id="pr" cx="0.62" cy="0.62" r="0.7"><stop offset="0" stop-color="#d8f4ff" stop-opacity="0.95"/><stop offset="0.35" stop-color="#9cd8f6" stop-opacity="0.6"/><stop offset="1" stop-color="#5aa8ea" stop-opacity="0"/></radialGradient></defs>
<rect width="90" height="90" fill="url(#pg)"/>
<g fill="#a8e0f8" opacity="0.55"><path d="M56 58 L0 18 L0 30Z"/><path d="M56 58 L4 0 L20 0Z"/><path d="M56 58 L38 0 L50 0Z"/><path d="M56 58 L90 8 L90 24Z"/><path d="M56 58 L0 46 L0 56Z"/><path d="M56 58 L90 40 L90 50Z"/><path d="M56 58 L0 70 L0 78Z"/></g>
<rect width="90" height="90" fill="url(#pr)"/>
<rect x="16" y="1.5" width="60" height="3.6" fill="#eef6ff"/><g fill="#1c3a78"><rect x="20" y="2.3" width="3" height="2"/><rect x="26" y="2.3" width="3" height="2"/><rect x="32" y="2.3" width="3" height="2"/><rect x="38" y="2.3" width="3" height="2"/><rect x="46" y="2.3" width="3" height="2"/><rect x="54" y="2.3" width="3" height="2"/><rect x="62" y="2.3" width="3" height="2"/><rect x="70" y="2.3" width="3" height="2"/></g>
<g stroke="#e2efff" stroke-width="1.5" stroke-dasharray="1.8 0.7" opacity="0.85"><path d="M5 8.8 h70"/><path d="M14 14.8 h52"/><path d="M5 18.8 h62"/><path d="M14 22.4 h54"/><path d="M5 26.2 h64"/><path d="M14 29.8 h58"/><path d="M5 33.8 h60"/><path d="M14 37.2 h62"/><path d="M5 40.8 h40"/><path d="M10 46.2 h28"/><path d="M6 49.8 h30"/><path d="M6 53.2 h28"/><path d="M6 62.2 h26"/><path d="M6 66.2 h22"/><path d="M6 70.2 h24"/></g>
<g fill="#ff3a3a"><rect x="10.5" y="14" width="7" height="2.4"/><rect x="10.5" y="21.6" width="7" height="2.4"/><rect x="10.5" y="28.9" width="7" height="2.4"/><rect x="10.5" y="36.4" width="7" height="2.4"/></g>
<rect x="47" y="8.5" width="10" height="2.4" fill="#8ee86a"/><g fill="#5ccc5a"><rect x="14" y="67.5" width="10" height="1.6"/><rect x="18" y="71.2" width="9" height="1.6"/></g>
<path d="M0 90 L0 80 L3 80 L3 74 L6 74 L6 79 L9 79 L9 71 L12 71 L12 82 L16 82 L16 77 L20 77 L20 90Z" fill="#cfe6f6" opacity="0.85"/>
<path d="M26 90 Q38 80 54 81 L52 90Z" fill="#35424e"/>
<text x="67" y="78.6" text-anchor="middle" font-size="40" font-weight="bold" fill="#fff" stroke="#fff" stroke-width="2.4" font-family="Liberation Serif,serif" transform="translate(67 64) scale(1.07 1.0) translate(-67 -64)">聘</text>
<text x="67" y="78.6" text-anchor="middle" font-size="40" font-weight="bold" fill="#dd1620" font-family="Liberation Serif,serif" transform="translate(67 64) scale(1.07 1.0) translate(-67 -64)">聘</text>
</svg></div>
<div class="t" style="left:750px;top:440.05px;font-size:13px;color:#5e6065;font-weight:normal;letter-spacing:-0.4px;">职位名称</div>
<div class="t" style="left:830px;top:440.05px;font-size:13px;color:#5e6065;font-weight:normal;letter-spacing:-0.4px;">职位类型6</div>
<div class="t" style="left:910px;top:440.05px;font-size:13px;color:#5e6065;font-weight:normal;letter-spacing:-0.4px;">4000</div>
<div class="t" style="left:990px;top:440.05px;font-size:13px;color:#5e6065;font-weight:normal;letter-spacing:-0.4px;">所属行业</div>
<div class="t" style="left:1070px;top:440.05px;font-size:13px;color:#5e6065;font-weight:normal;letter-spacing:-0.4px;">福利待遇</div>
<div class="t" style="left:1150px;top:440.05px;font-size:13px;color:#5e6065;font-weight:normal;letter-spacing:-0.4px;">公司地址</div>
<div class="t" style="left:1230px;top:440.05px;font-size:13px;color:#5e6065;font-weight:normal;letter-spacing:-0.4px;">2025-04-21</div>
<div class="t" style="left:1310px;top:440.05px;font-size:13px;color:#5e6065;font-weight:normal;letter-spacing:-0.4px;">0</div>
<div class="t" style="left:1390px;top:440.05px;font-size:13px;color:#5e6065;font-weight:normal;letter-spacing:-0.4px;">0</div>
<div class="a" style="left:1552px;top:435.0px;width:48px;height:23.5px;background:#fdf5ea;border:1px solid #fcf1e2;border-radius:3px"></div>
<div class="t" style="left:1561.5px;top:440.75px;font-size:11px;color:#e9a95e;font-weight:normal;">待审核</div>
<div class="a" style="left:1631.5px;top:456.7px;width:43px;height:1.6px;background:#7e52d6"></div>
<div class="a" style="left:1678.5px;top:456.7px;width:44px;height:1.6px;background:#7e52d6"></div>
<div class="t" style="left:1640.5px;top:435.85px;font-size:13px;color:#1d1d1d;font-weight:bold;letter-spacing:-0.4px;">查看</div>
<div class="t" style="left:1688.3px;top:435.85px;font-size:13px;color:#1d1d1d;font-weight:bold;letter-spacing:-0.4px;">删除</div>
<div class="a" style="left:239px;top:544.5px;width:12.5px;height:12.5px;border:1px solid #dcdfe6;border-radius:2px;background:#fff"></div>
<div class="t" style="left:284px;top:544.05px;font-size:13px;color:#5e6065;font-weight:normal;letter-spacing:-0.4px;">2</div>
<div class="t" style="left:329px;top:544.05px;font-size:13px;color:#5e6065;font-weight:normal;letter-spacing:-0.4px;">公司名称8</div>
<div class="t" style="left:410px;top:544.05px;font-size:13px;color:#5e6065;font-weight:normal;letter-spacing:-0.4px;">工号8</div>
<div class="t" style="left:490px;top:544.05px;font-size:13px;color:#5e6065;font-weight:normal;letter-spacing:-0.4px;">企业名称8</div>
<div class="a" style="left:570px;top:502px;width:90px;height:90px;overflow:hidden"><svg width="90" height="90" viewBox="0 0 90 90"><rect width="90" height="90" fill="#f3f3f3"/><rect x="4" y="4" width="82" height="82" fill="#f7f7f7"/>
<path d="M22.38 46.66 A11.3 11.3 0 1 1 35.92 53.71" fill="none" stroke="#3f9f2a" stroke-width="8.6"/>
<path d="M67.62 46.66 A11.3 11.3 0 1 0 54.08 53.71" fill="none" stroke="#4aae30" stroke-width="8.6"/>
<path d="M38 30 L46 29 L43 40 Z M27 33 L34 30 L31 38Z M56 30 L63 33 L59 38Z M40 50 L46 46 L45 57Z M49 40 L54 46 L48 52Z" fill="#8bd14a" opacity="0.75"/>
<path d="M26 30 L32 28 L28 36Z M62 28 L68 34 L63 32Z" fill="#2c7d1e" opacity="0.7"/>
<text x="45.8" y="72.4" text-anchor="middle" font-size="12.4" font-weight="bold" fill="#2f3544" font-family="Liberation Sans,sans-serif" letter-spacing="-0.1">LOOPED</text>
<text x="45.5" y="78" text-anchor="middle" font-size="4.6" fill="#5a5f6a" font-family="Liberation Sans,sans-serif">concept design</text>
</svg></div>
<div class="t" style="left:750px;top:544.05px;font-size:13px;color:#5e6065;font-weight:normal;letter-spacing:-0.4px;">职位名称8</div>
<div class="t" style="left:830px;top:544.05px;font-size:13px;color:#5e6065;font-weight:normal;letter-spacing:-0.4px;">职位类型8</div>
<div class="t" style="left:910px;top:544.05px;font-size:13px;color:#5e6065;font-weight:normal;letter-spacing:-0.4px;">8</div>
<div class="t" style="left:990px;top:544.05px;font-size:13px;color:#5e6065;font-weight:normal;letter-spacing:-0.4px;">所属行业8</div>
<div class="t" style="left:1070px;top:544.05px;font-size:13px;color:#5e6065;font-weight:normal;letter-spacing:-0.4px;">福利待遇8</div>
<div class="t" style="left:1150px;top:544.05px;font-size:13px;color:#5e6065;font-weight:normal;letter-spacing:-0.4px;">公司地址8</div>
<div class="t" style="left:1230px;top:544.05px;font-size:13px;color:#5e6065;font-weight:normal;letter-spacing:-0.4px;">2025-04-21</div>
<div class="t" style="left:1310px;top:544.05px;font-size:13px;color:#5e6065;font-weight:normal;letter-spacing:-0.4px;">0</div>
<div class="t" style="left:1390px;top:544.05px;font-size:13px;color:#5e6065;font-weight:normal;letter-spacing:-0.4px;">8</div>
<div class="a" style="left:1552px;top:539.0px;width:40px;height:23.5px;background:#f0f9eb;border:1px solid #edf8e7;border-radius:3px"></div>
<div class="t" style="left:1561.5px;top:544.75px;font-size:11px;color:#92d07a;font-weight:normal;">通过</div>
<div class="a" style="left:1631.5px;top:560.7px;width:43px;height:1.6px;background:#7e52d6"></div>
<div class="a" style="left:1678.5px;top:560.7px;width:44px;height:1.6px;background:#7e52d6"></div>
<div class="t" style="left:1640.5px;top:539.85px;font-size:13px;color:#1d1d1d;font-weight:bold;letter-spacing:-0.4px;">查看</div>
<div class="t" style="left:1688.3px;top:539.85px;font-size:13px;color:#1d1d1d;font-weight:bold;letter-spacing:-0.4px;">删除</div>
<div class="a" style="left:239px;top:647.5px;width:12.5px;height:12.5px;border:1px solid #dcdfe6;border-radius:2px;background:#fff"></div>
<div class="t" style="left:284px;top:647.05px;font-size:13px;color:#5e6065;font-weight:normal;letter-spacing:-0.4px;">3</div>
<div class="t" style="left:329px;top:647.05px;font-size:13px;color:#5e6065;font-weight:normal;letter-spacing:-0.4px;">公司名称7</div>
<div class="t" style="left:410px;top:647.05px;font-size:13px;color:#5e6065;font-weight:normal;letter-spacing:-0.4px;">工号7</div>
<div class="t" style="left:490px;top:647.05px;font-size:13px;color:#5e6065;font-weight:normal;letter-spacing:-0.4px;">企业名称7</div>
<div class="a" style="left:570px;top:605px;width:90px;height:90px;overflow:hidden"><svg width="90" height="90" viewBox="0 0 90 90"><rect width="90" height="90" fill="#fff"/>
<g fill="#cd9b3a"><path d="M38.2 8 L43.3 6 L43.3 49 L38.2 49Z"/><path d="M44.7 6 L49.9 8.5 L49.9 49 L44.7 49Z"/><path d="M31.4 25.5 L37 23.5 L37 50 L31.4 50Z"/><path d="M51.1 18.3 L56.7 20.8 L56.7 49 L51.1 49Z"/><path d="M24 39.5 L29.8 37.2 L29.8 51.5 L24 51.5Z"/><path d="M57.9 33.2 L63.2 35.8 L63.2 49 L57.9 49Z"/>
<path d="M12.9 52.9 Q40 46.5 62 49.3 Q72 49.3 79.4 43.4 Q75 53.5 60 55.8 Q38 58.5 12.9 52.9Z"/>
<path d="M64 47.6 Q72 46.6 78.3 42.2 Q73 47.8 64 48.9Z"/>
<path d="M11.4 58.6 Q36 55.2 63.6 60.6 Q38 62.2 11.4 58.6Z"/></g>
<text x="45" y="73.4" text-anchor="middle" font-size="6" fill="#d6b27c" font-family="Liberation Serif,serif" letter-spacing="0.1">CONSTRUCTION</text>
<text x="45.5" y="84" text-anchor="middle" font-size="7.6" fill="#c9a065" font-family="Liberation Sans,sans-serif" letter-spacing="0.9">— 建筑企业 —</text>
</svg></div>
<div class="t" style="left:750px;top:647.05px;font-size:13px;color:#5e6065;font-weight:normal;letter-spacing:-0.4px;">职位名称7</div>
<div class="t" style="left:830px;top:647.05px;font-size:13px;color:#5e6065;font-weight:normal;letter-spacing:-0.4px;">职位类型7</div>
<div class="t" style="left:910px;top:647.05px;font-size:13px;color:#5e6065;font-weight:normal;letter-spacing:-0.4px;">7</div>
<div class="t" style="left:990px;top:647.05px;font-size:13px;color:#5e6065;font-weight:normal;letter-spacing:-0.4px;">所属行业7</div>
<div class="t" style="left:1070px;top:647.05px;font-size:13px;color:#5e6065;font-weight:normal;letter-spacing:-0.4px;">福利待遇7</div>
<div class="t" style="left:1150px;top:647.05px;font-size:13px;color:#5e6065;font-weight:normal;letter-spacing:-0.4px;">公司地址7</div>
<div class="t" style="left:1230px;top:647.05px;font-size:13px;color:#5e6065;font-weight:normal;letter-spacing:-0.4px;">2025-04-21</div>
<div class="t" style="left:1310px;top:647.05px;font-size:13px;color:#5e6065;font-weight:normal;letter-spacing:-0.4px;">0</div>
<div class="t" style="left:1390px;top:647.05px;font-size:13px;color:#5e6065;font-weight:normal;letter-spacing:-0.4px;">7</div>
<div class="a" style="left:1552px;top:642.0px;width:40px;height:23.5px;background:#f0f9eb;border:1px solid #edf8e7;border-radius:3px"></div>
<div class="t" style="left:1561.5px;top:647.75px;font-size:11px;color:#92d07a;font-weight:normal;">通过</div>
<div class="a" style="left:1631.5px;top:663.7px;width:43px;height:1.6px;background:#7e52d6"></div>
<div class="a" style="left:1678.5px;top:663.7px;width:44px;height:1.6px;background:#7e52d6"></div>
<div class="t" style="left:1640.5px;top:642.85px;font-size:13px;color:#1d1d1d;font-weight:bold;letter-spacing:-0.4px;">查看</div>
<div class="t" style="left:1688.3px;top:642.85px;font-size:13px;color:#1d1d1d;font-weight:bold;letter-spacing:-0.4px;">删除</div>
<div class="a" style="left:239px;top:751.5px;width:12.5px;height:12.5px;border:1px solid #dcdfe6;border-radius:2px;background:#fff"></div>
<div class="t" style="left:284px;top:751.05px;font-size:13px;color:#5e6065;font-weight:normal;letter-spacing:-0.4px;">4</div>
<div class="t" style="left:329px;top:751.05px;font-size:13px;color:#5e6065;font-weight:normal;letter-spacing:-0.4px;">公司名称6</div>
<div class="t" style="left:410px;top:751.05px;font-size:13px;color:#5e6065;font-weight:normal;letter-spacing:-0.4px;">工号6</div>
<div class="t" style="left:490px;top:751.05px;font-size:13px;color:#5e6065;font-weight:normal;letter-spacing:-0.4px;">企业名称6</div>
<div class="a" style="left:570px;top:709px;width:90px;height:90px;overflow:hidden"><svg width="90" height="90" viewBox="0 0 90 90"><rect width="90" height="90" fill="#fff"/>
<g fill="#cd9b3a"><path d="M38.2 8 L43.3 6 L43.3 49 L38.2 49Z"/><path d="M44.7 6 L49.9 8.5 L49.9 49 L44.7 49Z"/><path d="M31.4 25.5 L37 23.5 L37 50 L31.4 50Z"/><path d="M51.1 18.3 L56.7 20.8 L56.7 49 L51.1 49Z"/><path d="M24 39.5 L29.8 37.2 L29.8 51.5 L24 51.5Z"/><path d="M57.9 33.2 L63.2 35.8 L63.2 49 L57.9 49Z"/>
<path d="M12.9 52.9 Q40 46.5 62 49.3 Q72 49.3 79.4 43.4 Q75 53.5 60 55.8 Q38 58.5 12.9 52.9Z"/>
<path d="M64 47.6 Q72 46.6 78.3 42.2 Q73 47.8 64 48.9Z"/>
<path d="M11.4 58.6 Q36 55.2 63.6 60.6 Q38 62.2 11.4 58.6Z"/></g>
<text x="45" y="73.4" text-anchor="middle" font-size="6" fill="#d6b27c" font-family="Liberation Serif,serif" letter-spacing="0.1">CONSTRUCTION</text>
<text x="45.5" y="84" text-anchor="middle" font-size="7.6" fill="#c9a065" font-family="Liberation Sans,sans-serif" letter-spacing="0.9">— 建筑企业 —</text>
</svg></div>
<div class="t" style="left:750px;top:751.05px;font-size:13px;color:#5e6065;font-weight:normal;letter-spacing:-0.4px;">职位名称6</div>
<div class="t" style="left:830px;top:751.05px;font-size:13px;color:#5e6065;font-weight:normal;letter-spacing:-0.4px;">职位类型6</div>
<div class="t" style="left:910px;top:751.05px;font-size:13px;color:#5e6065;font-weight:normal;letter-spacing:-0.4px;">6</div>
<div class="t" style="left:990px;top:751.05px;font-size:13px;color:#5e6065;font-weight:normal;letter-spacing:-0.4px;">所属行业6</div>
<div class="t" style="left:1070px;top:751.05px;font-size:13px;color:#5e6065;font-weight:normal;letter-spacing:-0.4px;">福利待遇6</div>
<div class="t" style="left:1150px;top:751.05px;font-size:13px;color:#5e6065;font-weight:normal;letter-spacing:-0.4px;">公司地址6</div>
<div class="t" style="left:1230px;top:751.05px;font-size:13px;color:#5e6065;font-weight:normal;letter-spacing:-0.4px;">2025-04-21</div>
<div class="t" style="left:1310px;top:751.05px;font-size:13px;color:#5e6065;font-weight:normal;letter-spacing:-0.4px;">0</div>
<div class="t" style="left:1390px;top:751.05px;font-size:13px;color:#5e6065;font-weight:normal;letter-spacing:-0.4px;">6</div>
<div class="a" style="left:1552px;top:746.0px;width:40px;height:23.5px;background:#f0f9eb;border:1px solid #edf8e7;border-radius:3px"></div>
<div class="t" style="left:1561.5px;top:751.75px;font-size:11px;color:#92d07a;font-weight:normal;">通过</div>
<div class="a" style="left:1631.5px;top:767.7px;width:43px;height:1.6px;background:#7e52d6"></div>
<div class="a" style="left:1678.5px;top:767.7px;width:44px;height:1.6px;background:#7e52d6"></div>
<div class="t" style="left:1640.5px;top:746.85px;font-size:13px;color:#1d1d1d;font-weight:bold;letter-spacing:-0.4px;">查看</div>
<div class="t" style="left:1688.3px;top:746.85px;font-size:13px;color:#1d1d1d;font-weight:bold;letter-spacing:-0.4px;">删除</div>
<div class="a" style="left:239px;top:855.5px;width:12.5px;height:12.5px;border:1px solid #dcdfe6;border-radius:2px;background:#fff"></div>
<div class="t" style="left:284px;top:855.05px;font-size:13px;color:#5e6065;font-weight:normal;letter-spacing:-0.4px;">5</div>
<div class="t" style="left:329px;top:855.05px;font-size:13px;color:#5e6065;font-weight:normal;letter-spacing:-0.4px;">公司名称5</div>
<div class="t" style="left:410px;top:855.05px;font-size:13px;color:#5e6065;font-weight:normal;letter-spacing:-0.4px;">工号5</div>
<div class="t" style="left:490px;top:855.05px;font-size:13px;color:#5e6065;font-weight:normal;letter-spacing:-0.4px;">企业名称5</div>
<div class="a" style="left:570px;top:813px;width:90px;height:90px;overflow:hidden"><svg width="90" height="90" viewBox="0 0 90 90"><rect width="90" height="90" fill="#fff"/>
<circle cx="44.6" cy="35" r="18" fill="none" stroke="#3a8ae0" stroke-width="3.8"/>
<path d="M35.5 21 L42 21 L40.4 31.6 L50.6 31.6 L52.2 21 L58.7 21 L54.6 48.6 L48.1 48.6 L49.7 37.4 L39.5 37.4 L37.9 48.6 L31.4 48.6Z" fill="#2a80e2"/>
<text x="47" y="76.5" text-anchor="middle" font-size="20.5" font-weight="bold" fill="#2f86e0" font-family="Liberation Sans,sans-serif">华信光电</text>
</svg></div>
<div class="t" style="left:750px;top:855.05px;font-size:13px;color:#5e6065;font-weight:normal;letter-spacing:-0.4px;">职位名称5</div>
<div class="t" style="left:830px;top:855.05px;font-size:13px;color:#5e6065;font-weight:normal;letter-spacing:-0.4px;">职位类型5</div>
<div class="t" style="left:910px;top:855.05px;font-size:13px;color:#5e6065;font-weight:normal;letter-spacing:-0.4px;">5</div>
<div class="t" style="left:990px;top:855.05px;font-size:13px;color:#5e6065;font-weight:normal;letter-spacing:-0.4px;">所属行业5</div>
<div class="t" style="left:1070px;top:855.05px;font-size:13px;color:#5e6065;font-weight:normal;letter-spacing:-0.4px;">福利待遇5</div>
<div class="t" style="left:1150px;top:855.05px;font-size:13px;color:#5e6065;font-weight:normal;letter-spacing:-0.4px;">公司地址5</div>
<div class="t" style="left:1230px;top:855.05px;font-size:13px;color:#5e6065;font-weight:normal;letter-spacing:-0.4px;">2025-04-21</div>
<div class="t" style="left:1310px;top:855.05px;font-size:13px;color:#5e6065;font-weight:normal;letter-spacing:-0.4px;">0</div>
<div class="t" style="left:1390px;top:855.05px;font-size:13px;color:#5e6065;font-weight:normal;letter-spacing:-0.4px;">5</div>
<div class="a" style="left:1552px;top:850.0px;width:40px;height:23.5px;background:#f0f9eb;border:1px solid #edf8e7;border-radius:3px"></div>
<div class="t" style="left:1561.5px;top:855.75px;font-size:11px;color:#92d07a;font-weight:normal;">通过</div>
<div class="a" style="left:1631.5px;top:871.7px;width:43px;height:1.6px;background:#7e52d6"></div>
<div class="a" style="left:1678.5px;top:871.7px;width:44px;height:1.6px;background:#7e52d6"></div>
<div class="t" style="left:1640.5px;top:850.85px;font-size:13px;color:#1d1d1d;font-weight:bold;letter-spacing:-0.4px;">查看</div>
<div class="t" style="left:1688.3px;top:850.85px;font-size:13px;color:#1d1d1d;font-weight:bold;letter-spacing:-0.4px;">删除</div>
<div class="a" style="left:570px;top:917px;width:90px;height:31px;overflow:hidden"><svg width="90" height="90" viewBox="0 0 90 90"><rect width="90" height="90" fill="#fff"/>
<path d="M20 31 Q26 22.5 36 23 Q44 23.5 50 25 L46 31Z" fill="#c4122c"/>
<path d="M50 25 Q56 19.5 66 20 Q78 21 89.5 21.5 L86 31 L73 31 L75 24.6 L56 24.6 L53 31 L46 31Z" fill="#c8142e"/></svg></div>
<div class="a" style="left:1905px;top:0;width:15px;height:948px;background:#f8f8f8;border-left:1px solid #ececec"></div>
<div class="a" style="left:1908px;top:15px;width:9.5px;height:655px;border-radius:5px;background:#8c8c8c"></div>
<svg class="a" style="left:1908px;top:3px" width="10" height="6" viewBox="0 0 10 6"><path d="M0 5.5 L5 0.5 L10 5.5Z" fill="#7a7a7a"/></svg>
<svg class="a" style="left:1908px;top:937.5px" width="10" height="6" viewBox="0 0 10 6"><path d="M0 0.5 L10 0.5 L5 5.5Z" fill="#7a7a7a"/></svg>
<svg class="a" style="left:275px;top:380px" width="14" height="21" viewBox="0 0 14 21"><path d="M0.5 0.5 L0.5 16.5 L4.2 13 L7 19.2 L9.4 18.2 L6.8 12.2 L11.8 12.2 Z" fill="#fff" stroke="#111" stroke-width="1" stroke-linejoin="miter"/></svg>
</body></html>
